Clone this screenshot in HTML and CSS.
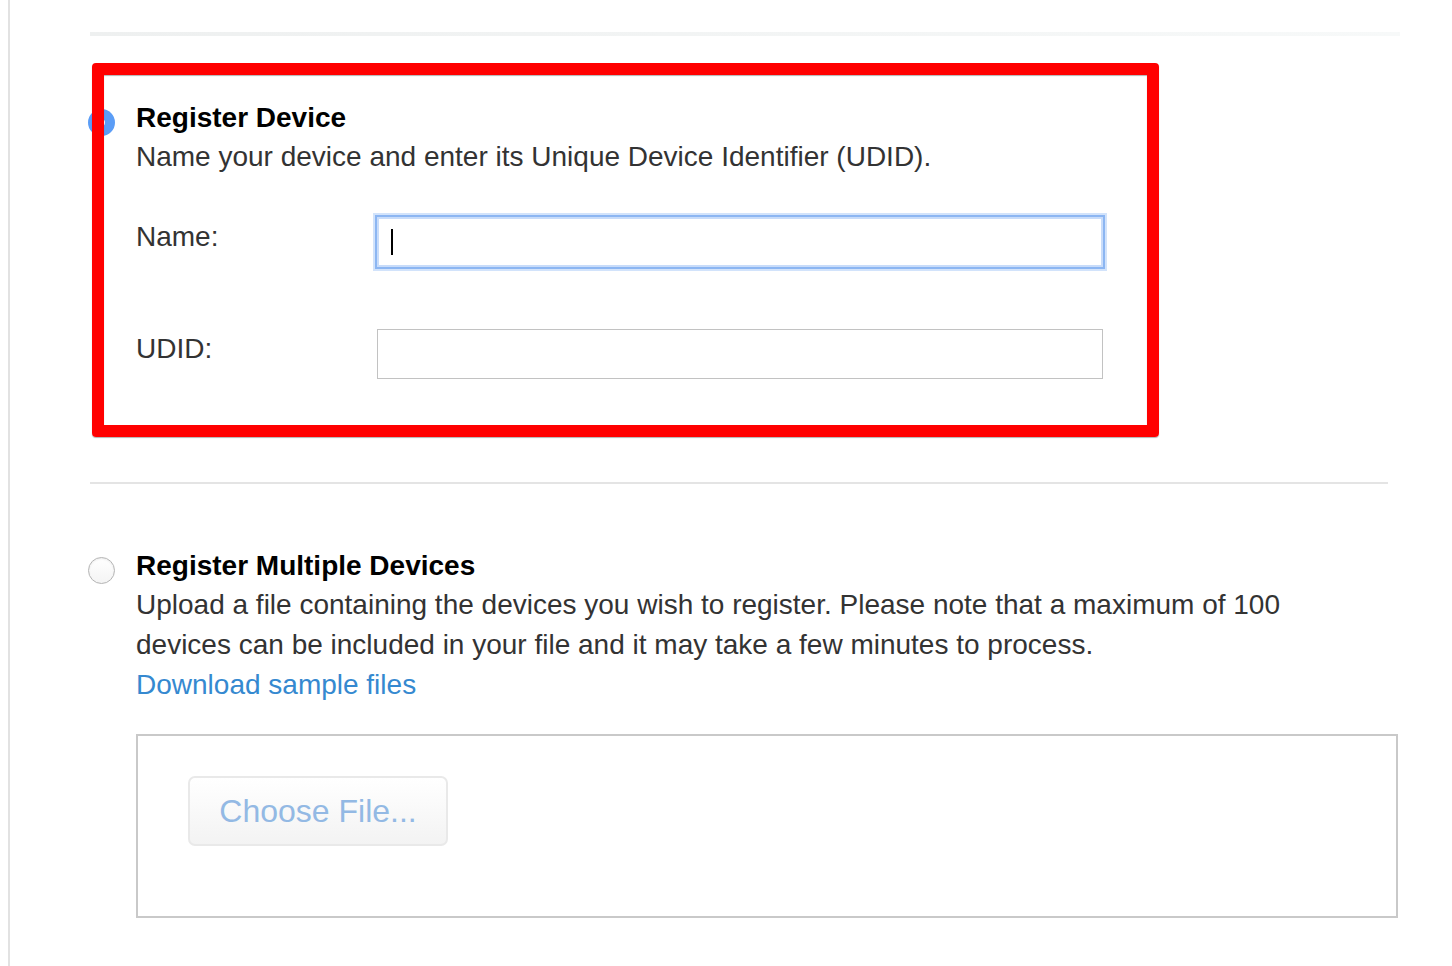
FILE: index.html
```html
<!DOCTYPE html>
<html lang="en">
<head>
<meta charset="utf-8">
<title>Register Device</title>
<link rel="stylesheet" href="styles.css">
</head>
<body>
<div class="page">
  <div class="top-rule"></div>

  <section class="option option-single">
    <span class="radio radio-on"></span>
    <div class="option-body">
      <h2 class="option-title">Register Device</h2>
      <p class="option-desc">Name your device and enter its Unique Device Identifier (UDID).</p>
      <div class="field-row">
        <label class="field-label">Name:</label>
        <div class="text-input focused"><span class="caret"></span></div>
      </div>
      <div class="field-row field-row-2">
        <label class="field-label">UDID:</label>
        <div class="text-input"></div>
      </div>
    </div>
  </section>

  <div class="separator"></div>

  <section class="option option-multi">
    <span class="radio radio-off"></span>
    <div class="option-body">
      <h2 class="option-title">Register Multiple Devices</h2>
      <p class="option-desc wide">Upload a file containing the devices you wish to register. Please note that a maximum of 100 devices can be included in your file and it may take a few minutes to process.</p>
      <a class="link" href="#">Download sample files</a>
      <div class="upload-box">
        <button class="choose-btn" type="button">Choose File...</button>
      </div>
    </div>
  </section>

  <div class="highlight"></div>
</div>
</body>
</html>
```

FILE: styles.css
```css
* { box-sizing: border-box; }

html, body {
  margin: 0;
  padding: 0;
  background: #ffffff;
}

body {
  font-family: "Liberation Sans", Arial, "Helvetica Neue", sans-serif;
  color: #333333;
}

.page {
  margin-left: 8px;
  border-left: 2px solid #e2e2e2;
  min-height: 966px;
  padding-left: 78px;
  padding-top: 32px;
}

.top-rule {
  margin-left: 2px;
  width: 1310px;
  height: 4px;
  background: linear-gradient(to right, #eef0f0, #f7f9f9);
}

.option {
  display: grid;
  grid-template-columns: 28px 1fr;
  column-gap: 20px;
}

.option-single { margin-top: 63px; }
.option-multi { margin-top: 63px; }

.radio {
  display: block;
  width: 27px;
  height: 27px;
  border-radius: 50%;
  margin-top: 10px;
}

.radio-on {
  background: #5b9df6;
  position: relative;
}
.radio-on::after {
  content: "";
  position: absolute;
  left: 10px;
  top: 10px;
  width: 7px;
  height: 7px;
  border-radius: 50%;
  background: #ffffff;
}

.radio-off {
  border: 1px solid #b4b4b4;
  background: linear-gradient(#ffffff, #f4f4f4);
  box-shadow: inset 0 1px 2px rgba(0, 0, 0, 0.08);
}

.option-title {
  margin: 0;
  font-size: 28px;
  line-height: 38px;
  font-weight: 700;
  color: #000000;
}

.option-desc {
  margin: 0;
  font-size: 28px;
  line-height: 40px;
  color: #333333;
}

.option-desc.wide { width: 1200px; }

.field-row {
  display: flex;
  align-items: flex-start;
  margin-top: 40px;
}
.field-row-2 { margin-top: 62px; }

.field-label {
  width: 241px;
  font-size: 28px;
  line-height: 40px;
  color: #333333;
}

.text-input {
  width: 726px;
  height: 50px;
  border: 1px solid #c2c2c2;
  background: #ffffff;
  display: flex;
  align-items: center;
  padding-left: 12px;
}

.text-input.focused {
  border: 2px solid #c8dcfa;
  box-shadow: 0 0 0 2px #8cb6f2, 0 0 0 4px #d2e3fb;
}

.caret {
  display: block;
  width: 2px;
  height: 26px;
  background: #000000;
}

.separator {
  margin-top: 103px;
  margin-left: 2px;
  width: 1298px;
  height: 2px;
  background: #e4e4e4;
}

.link {
  display: block;
  font-size: 28px;
  line-height: 40px;
  color: #3589d0;
  text-decoration: none;
}

.upload-box {
  margin-top: 29px;
  width: 1262px;
  height: 184px;
  border: 2px solid #c9c9c9;
  padding: 40px 0 0 50px;
}

.choose-btn {
  width: 260px;
  height: 70px;
  border: 2px solid #e9e9e9;
  border-radius: 7px;
  background: linear-gradient(#ffffff, #f3f3f3);
  font-family: "Liberation Sans", Arial, sans-serif;
  font-size: 32px;
  color: #93b9e4;
  padding: 0;
  cursor: pointer;
}

.highlight {
  position: absolute;
  left: 92px;
  top: 63px;
  width: 1067px;
  height: 374px;
  border: 12px solid #ff0000;
  border-radius: 4px;
  box-shadow: 0 1px 1px rgba(0, 0, 0, 0.3), inset 0 1px 1px rgba(0, 0, 0, 0.3);
  pointer-events: none;
}
```
